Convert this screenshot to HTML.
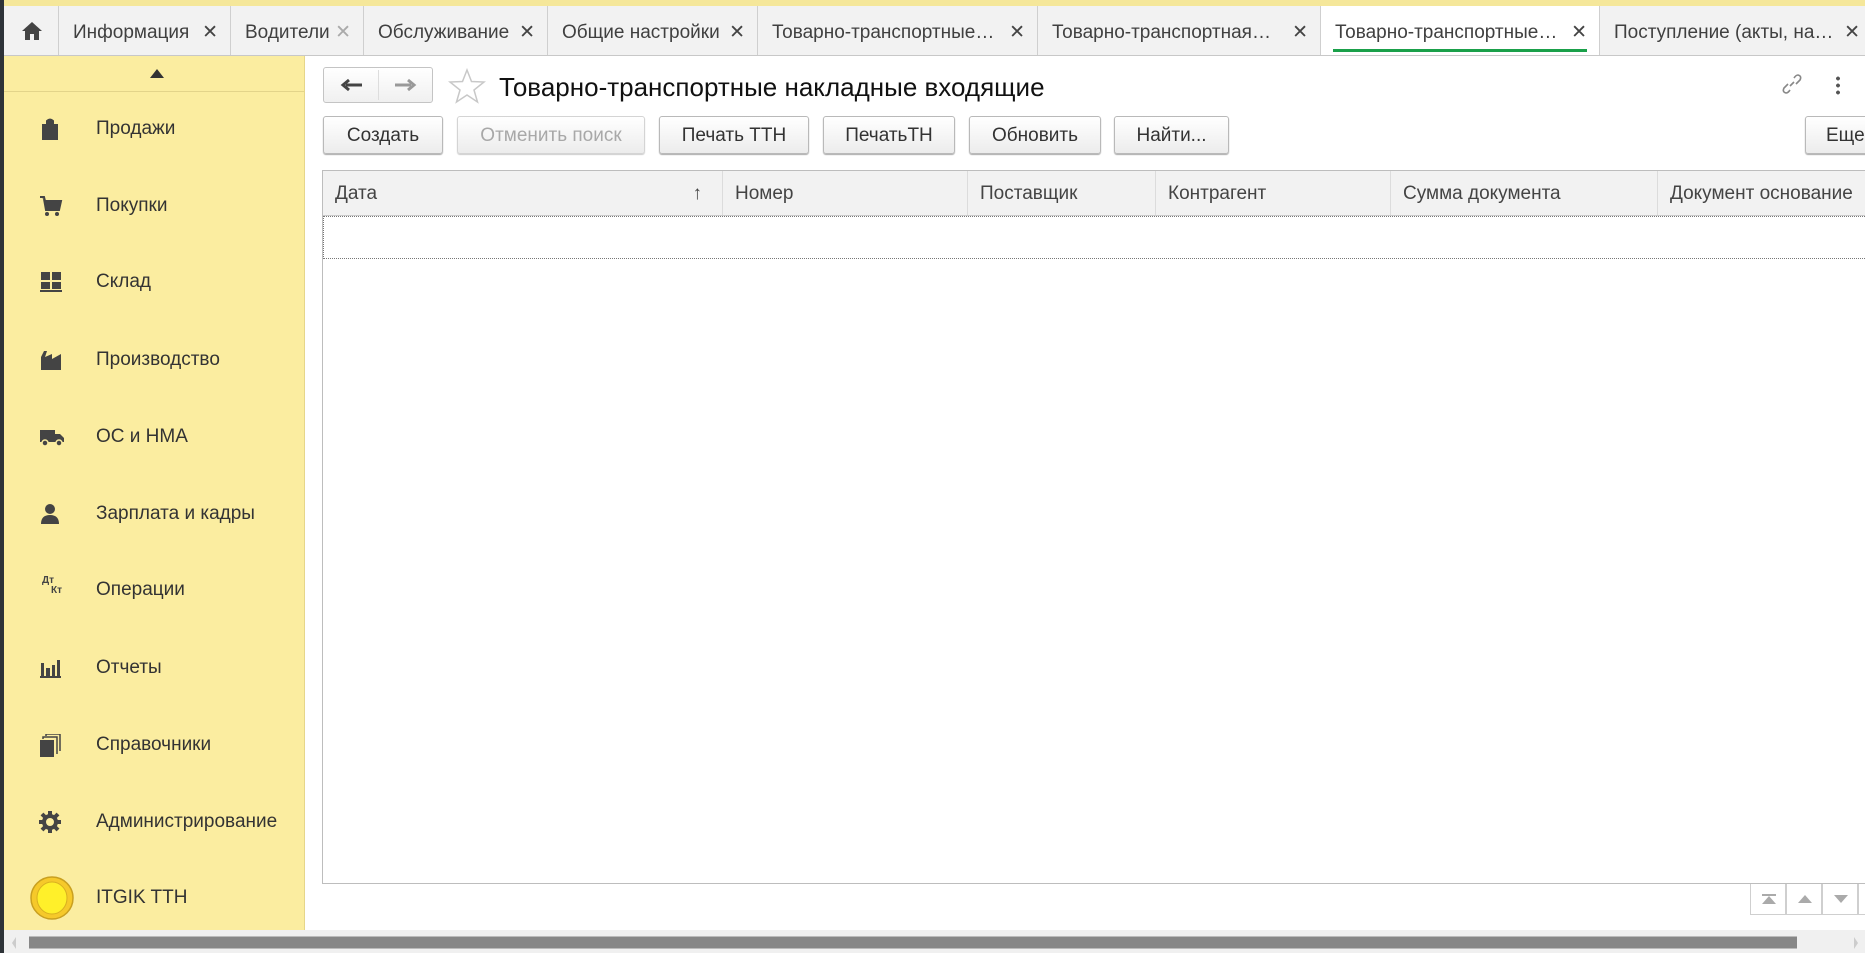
<!DOCTYPE html>
<html><head><meta charset="utf-8"><style>
*{box-sizing:border-box;margin:0;padding:0}
body{width:1865px;height:953px;overflow:hidden;background:#fff;font-family:"Liberation Sans",sans-serif;color:#333;position:relative}
.abs{position:absolute}
#topline{left:0;top:0;width:1865px;height:6px;background:#f5e79a}
#leftedge{left:0;top:0;width:4px;height:953px;background:#2e3338}
#tabs{left:4px;top:6px;width:1861px;height:50px;background:#f2f2f2;border-bottom:1px solid #c8c8c8}
.tab{position:absolute;top:0;height:49px;border-right:1px solid #cfcfcf;font-size:19px;line-height:54px;padding-left:14px;color:#404040;white-space:nowrap;overflow:hidden}
.tab .x{position:absolute;right:12px;top:0;font-size:19px;color:#444}
.tab.act{background:#fff}
.tab.act:after{content:"";position:absolute;left:12px;right:12px;bottom:3px;height:3px;background:#1aa04a}
#side{left:4px;top:56px;width:301px;height:874px;background:#fbeda0;border-right:1px solid #e6d68a}
#side .up{height:36px;border-bottom:1px solid #e3d48a;position:relative}
.item{position:absolute;left:0;width:300px;height:40px;font-size:19px;line-height:40px;color:#333;margin-top:3px}
.item .t{position:absolute;left:92px}
.item svg{position:absolute;left:35px;top:9px}
.btn{position:absolute;top:116px;height:38px;border:1px solid #b9b9b9;border-radius:3px;background:linear-gradient(#fff,#ececec);box-shadow:0 1px 1px #aaa;font-size:19px;line-height:38px;text-align:center;color:#333}
.btn.dis{color:#a8a8a8;border-color:#d4d4d4;box-shadow:0 1px 1px #ccc}
#grid{left:322px;top:170px;width:1560px;height:714px;border:1px solid #bdbdbd}
#head{position:absolute;left:0;top:0;width:100%;height:45px;background:#f2f2f2;border-bottom:1px solid #c9c9c9}
.col{position:absolute;top:0;height:44px;line-height:46px;font-size:19px;color:#444;padding-left:12px;border-right:1px solid #dcdcdc}
#row{position:absolute;left:0;top:45px;width:100%;height:43px;border:1px dotted #777}
.nb{position:absolute;top:884px;width:36px;height:31px;border:1px solid #cfcfcf;border-top:none;background:#fff}
</style></head><body>
<div class="abs" id="topline"></div>
<div class="abs" id="tabs">
 <div class="tab" style="left:0;width:55px;padding:0"><svg width="22" height="20" viewBox="0 0 22 20" style="position:absolute;left:17px;top:15px"><path d="M11 1 L1 10 H4 V19 H9 V13 H13 V19 H18 V10 H21 Z" fill="#444"/></svg></div>
 <div class="tab" style="left:55px;width:172px">Информация<span class="x">✕</span></div>
 <div class="tab" style="left:227px;width:133px">Водители<span class="x" style="color:#aaa">✕</span></div>
 <div class="tab" style="left:360px;width:184px">Обслуживание<span class="x">✕</span></div>
 <div class="tab" style="left:544px;width:210px">Общие настройки<span class="x">✕</span></div>
 <div class="tab" style="left:754px;width:280px">Товарно-транспортные…<span class="x">✕</span></div>
 <div class="tab" style="left:1034px;width:283px">Товарно-транспортная…<span class="x">✕</span></div>
 <div class="tab act" style="left:1317px;width:279px">Товарно-транспортные…<span class="x">✕</span></div>
 <div class="tab" style="left:1596px;width:280px;border:none">Поступление (акты, на…<span class="x" style="right:20px">✕</span></div>
</div>
<div class="abs" id="leftedge"></div>
<div class="abs" id="side">
 <div class="up"><svg width="14" height="9" style="position:absolute;left:146px;top:13px"><path d="M7 0 L14 9 H0Z" fill="#333"/></svg></div>
 <div class="item" style="top:50px"><svg width="22" height="22" viewBox="0 0 22 22"><path d="M4 7 H18 V21 H4Z M8 7 V3 Q11 0 14 3 V7" fill="#444" stroke="#444" stroke-width="2"/></svg><span class="t">Продажи</span></div>
 <div class="item" style="top:127px"><svg width="24" height="22" viewBox="0 0 24 22"><path d="M1 2 H5 L6 6 H22 L20 15 H7 L5 4" fill="#444" stroke="#444" stroke-width="2"/><circle cx="8" cy="19" r="2" fill="#444"/><circle cx="18" cy="19" r="2" fill="#444"/></svg><span class="t">Покупки</span></div>
 <div class="item" style="top:203px"><svg width="24" height="22" viewBox="0 0 24 22"><rect x="2" y="1" width="9" height="8" fill="#444"/><rect x="13" y="1" width="9" height="8" fill="#444"/><rect x="2" y="11" width="9" height="7" fill="#444"/><rect x="13" y="11" width="9" height="7" fill="#444"/><rect x="1" y="19" width="22" height="2" fill="#444"/></svg><span class="t">Склад</span></div>
 <div class="item" style="top:281px"><svg width="24" height="22" viewBox="0 0 24 22"><path d="M2 21 V8 L5 2 H8 L6 8 L13 5 V10 L22 5 V21Z" fill="#444"/></svg><span class="t">Производство</span></div>
 <div class="item" style="top:358px"><svg width="26" height="22" viewBox="0 0 26 22"><path d="M1 4 H16 V16 H1Z M16 8 H21 L25 12 V16 H16Z" fill="#444"/><circle cx="6" cy="17" r="3" fill="#444" stroke="#fbeda0" stroke-width="1.5"/><circle cx="20" cy="17" r="3" fill="#444" stroke="#fbeda0" stroke-width="1.5"/></svg><span class="t">ОС и НМА</span></div>
 <div class="item" style="top:435px"><svg width="22" height="22" viewBox="0 0 22 22"><circle cx="11" cy="6" r="5" fill="#444"/><path d="M2 21 Q2 12 11 12 Q20 12 20 21Z" fill="#444"/></svg><span class="t">Зарплата и кадры</span></div>
 <div class="item" style="top:511px"><span style="position:absolute;left:38px;top:-9px;font-size:10px;font-weight:bold;color:#444">Дт</span><span style="position:absolute;left:47px;top:1px;font-size:10px;font-weight:bold;color:#444">Кт</span><span class="t">Операции</span></div>
 <div class="item" style="top:589px"><svg width="22" height="22" viewBox="0 0 22 22"><rect x="2" y="6" width="3" height="13" fill="#444"/><rect x="7" y="11" width="4" height="8" fill="#444"/><rect x="13" y="8" width="3" height="11" fill="#444"/><rect x="18" y="3" width="3" height="16" fill="#444"/><rect x="1" y="19" width="21" height="2" fill="#444"/></svg><span class="t">Отчеты</span></div>
 <div class="item" style="top:666px"><svg width="22" height="24" viewBox="0 0 22 24"><rect x="1" y="6" width="14" height="17" fill="#444"/><path d="M4 5 V3 H18 V20 M7 2 V0 H21 V17" fill="none" stroke="#444" stroke-width="1.5"/></svg><span class="t">Справочники</span></div>
 <div class="item" style="top:743px"><svg width="22" height="22" viewBox="0 0 22 22"><circle cx="11" cy="11" r="6" fill="none" stroke="#444" stroke-width="4"/><g stroke="#444" stroke-width="4"><path d="M11 0V5M11 17V22M0 11H5M17 11H22M3 3L6.5 6.5M15.5 15.5L19 19M19 3L15.5 6.5M6.5 15.5L3 19"/></g></svg><span class="t">Администрирование</span></div>
 <div class="item" style="top:819px"><svg width="44" height="44" viewBox="0 0 44 44" style="left:26px;top:-2px"><ellipse cx="22" cy="22" rx="21" ry="21" fill="#f6c92a" stroke="#c9a020" stroke-width="1.5"/><ellipse cx="22" cy="22" rx="15" ry="16" fill="#fff02a" stroke="#d9b020" stroke-width="1"/></svg><span class="t">ITGIK TTH</span></div>
</div>
<!-- content -->
<div class="abs" style="left:323px;top:67px;width:110px;height:36px;border:1px solid #c4c4c4;border-radius:3px;background:linear-gradient(#fff,#f0f0f0)"><div style="position:absolute;left:54px;top:2px;width:1px;height:30px;background:#ddd"></div>
<svg width="24" height="14" style="position:absolute;left:16px;top:10px"><path d="M22 7 H6 M9 2 L3 7 L9 12" stroke="#444" stroke-width="3" fill="none"/></svg>
<svg width="24" height="14" style="position:absolute;left:69px;top:10px"><path d="M2 7 H18 M15 2 L21 7 L15 12" stroke="#999" stroke-width="3" fill="none"/></svg></div>
<svg class="abs" style="left:448px;top:68px" width="38" height="36" viewBox="0 0 38 36"><path d="M19 2 L23.5 13.5 L36 14 L26 22 L29.5 34 L19 27 L8.5 34 L12 22 L2 14 L14.5 13.5Z" fill="none" stroke="#c8c8c8" stroke-width="1.5"/></svg>
<div class="abs" style="left:499px;top:72px;font-size:26px;color:#111">Товарно-транспортные накладные входящие</div>
<svg class="abs" style="left:1780px;top:72px" width="24" height="24" viewBox="0 0 24 24"><path d="M10 14 L14 10 M8 12 L4 16 Q2 20 6 21 Q8 21 10 18 M16 12 L20 8 Q22 4 18 3 Q16 3 14 6" fill="none" stroke="#888" stroke-width="1.6"/></svg>
<div class="abs" style="left:1836px;top:75px;width:4px;height:20px;background:radial-gradient(circle,#555 1.8px,transparent 2px) 0 0/4px 7px"></div>
<div class="btn" style="left:323px;width:120px">Создать</div>
<div class="btn dis" style="left:457px;width:188px">Отменить поиск</div>
<div class="btn" style="left:659px;width:150px">Печать ТТН</div>
<div class="btn" style="left:823px;width:132px">ПечатьТН</div>
<div class="btn" style="left:969px;width:132px">Обновить</div>
<div class="btn" style="left:1114px;width:115px">Найти...</div>
<div class="btn" style="left:1805px;width:100px;text-align:left;padding-left:20px">Еще</div>
<div class="abs" id="grid">
 <div id="head">
  <div class="col" style="left:0;width:400px">Дата<span style="position:absolute;right:20px">↑</span></div>
  <div class="col" style="left:400px;width:245px">Номер</div>
  <div class="col" style="left:645px;width:188px">Поставщик</div>
  <div class="col" style="left:833px;width:235px">Контрагент</div>
  <div class="col" style="left:1068px;width:267px">Сумма документа</div>
  <div class="col" style="left:1335px;width:260px;border:none">Документ основание</div>
 </div>
 <div id="row"></div>
</div>
<div class="nb" style="left:1750px"><svg width="36" height="30"><rect x="11" y="10" width="14" height="2" fill="#aaa"/><path d="M18 12 L25 20 H11Z" fill="#aaa"/></svg></div>
<div class="nb" style="left:1786px"><svg width="36" height="30"><path d="M18 11 L25 19 H11Z" fill="#aaa"/></svg></div>
<div class="nb" style="left:1822px"><svg width="36" height="30"><path d="M18 19 L25 11 H11Z" fill="#aaa"/></svg></div>
<div class="nb" style="left:1858px"></div>
<div class="abs" style="left:4px;top:930px;width:1861px;height:23px;background:#f0f0f0"></div>
<div class="abs" style="left:29px;top:936px;width:1768px;height:13px;background:#878787;border-top:1px solid #bbb;border-bottom:1px solid #bbb"></div>
<svg class="abs" style="left:10px;top:935px" width="8" height="16"><path d="M6 2 L2 8 L6 14" fill="#ccc"/></svg>
<svg class="abs" style="left:1852px;top:935px" width="8" height="16"><path d="M2 2 L6 8 L2 14" fill="#ccc"/></svg>
</body></html>
